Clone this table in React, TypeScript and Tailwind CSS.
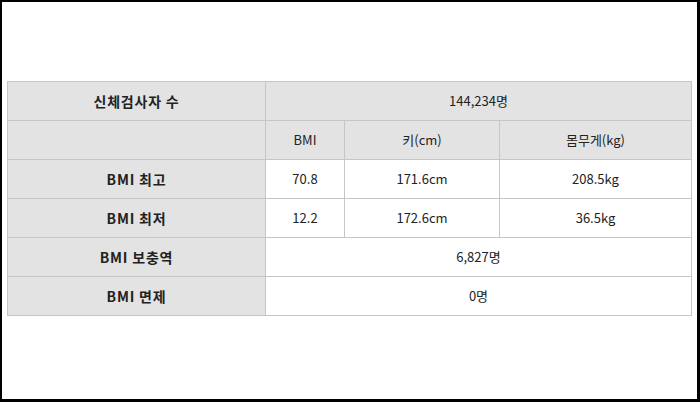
const rows = [
  { label: 'BMI 최고', bmi: '70.8', height: '171.6cm', weight: '208.5kg' },
  { label: 'BMI 최저', bmi: '12.2', height: '172.6cm', weight: '36.5kg' },
];

const th = 'border border-[#c6c6c6] bg-[#e3e3e3] font-bold text-[14px] tracking-[0.8px] text-[#222] h-[39px] p-0';
const head = 'border border-[#c6c6c6] bg-[#e3e3e3] font-normal text-[13px] text-[#222] h-[39px] p-0';
const td = 'border border-[#c6c6c6] bg-white font-normal text-[13px] text-[#222] h-[39px] p-0';

export default function App() {
  return (
    <div
      className="w-[700px] h-[402px] bg-white border-t-2 border-l-2 border-r-[3px] border-b-[3px] border-black pt-[79px] pl-[5px]"
      style={{ fontFamily: '"Noto Sans CJK KR", "Noto Sans", sans-serif' }}
    >
      <table className="w-[684px] border-collapse text-center table-fixed">
        <colgroup>
          <col className="w-[258px]" />
          <col className="w-[79px]" />
          <col className="w-[155px]" />
          <col className="w-[192px]" />
        </colgroup>
        <tbody>
          <tr>
            <th className={th}>신체검사자 수</th>
            <td colSpan={3} className={head}>
              144,234명
            </td>
          </tr>
          <tr>
            <th className={th}></th>
            <td className={head}>BMI</td>
            <td className={head}>키(cm)</td>
            <td className={head}>몸무게(kg)</td>
          </tr>
          {rows.map((r) => (
            <tr key={r.label}>
              <th className={th}>{r.label}</th>
              <td className={td}>{r.bmi}</td>
              <td className={td}>{r.height}</td>
              <td className={td}>{r.weight}</td>
            </tr>
          ))}
          <tr>
            <th className={th}>BMI 보충역</th>
            <td colSpan={3} className={td}>
              6,827명
            </td>
          </tr>
          <tr>
            <th className={th}>BMI 면제</th>
            <td colSpan={3} className={td}>
              0명
            </td>
          </tr>
        </tbody>
      </table>
    </div>
  );
}
